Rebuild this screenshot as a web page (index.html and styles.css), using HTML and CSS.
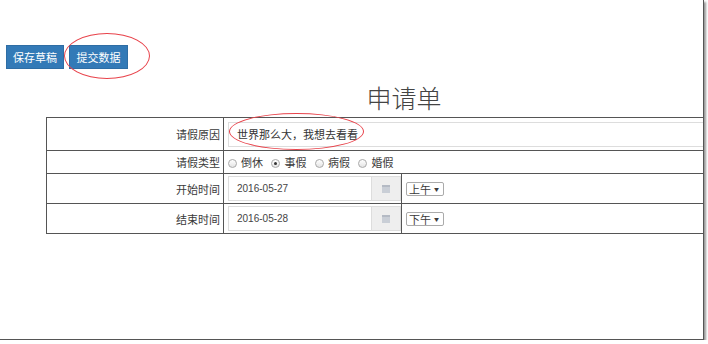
FILE: index.html
```html
<!DOCTYPE html>
<html lang="zh-CN">
<head>
    <meta charset="UTF-8">
    <title>申请单</title>
    <link rel="stylesheet" href="styles.css">
</head>
<body>
    <div class="shot">
        <div class="toolbar">
            <button class="btn">保存草稿</button>
            <button class="btn">提交数据</button>
        </div>
        <div class="sheet">
            <h1 class="title">申请单</h1>
            <table class="form">
                <tr class="row-reason">
                    <td class="label">请假原因</td>
                    <td colspan="2"><div class="text-input">世界那么大，我想去看看</div></td>
                </tr>
                <tr class="row-type">
                    <td class="label">请假类型</td>
                    <td colspan="2">
                        <span class="radio"></span><span class="radio-text">倒休</span>
                        <span class="radio checked"></span><span class="radio-text">事假</span>
                        <span class="radio"></span><span class="radio-text">病假</span>
                        <span class="radio"></span><span class="radio-text">婚假</span>
                    </td>
                </tr>
                <tr class="row-date">
                    <td class="label">开始时间</td>
                    <td class="date-cell">
                        <div class="date-group">
                            <div class="date-value">2016-05-27</div>
                            <div class="date-addon"><span class="cal"></span></div>
                        </div>
                    </td>
                    <td><span class="select">上午<span class="caret">▼</span></span></td>
                </tr>
                <tr class="row-date last">
                    <td class="label">结束时间</td>
                    <td class="date-cell">
                        <div class="date-group">
                            <div class="date-value">2016-05-28</div>
                            <div class="date-addon"><span class="cal"></span></div>
                        </div>
                    </td>
                    <td><span class="select">下午<span class="caret">▼</span></span></td>
                </tr>
            </table>
        </div>
        <!-- annotation marks -->
        <div class="mark mark-submit"></div>
        <div class="mark mark-reason"></div>
    </div>
</body>
</html>
```

FILE: styles.css
```css
body, html {
    margin: 0;
    background-color: white;
    font-family: "Noto Sans CJK SC", "Microsoft YaHei", sans-serif;
    font-size: 11px;
    color: #3a3a3a;
}
.shot {
    position: relative;
    width: 703px;
    height: 339px;
    overflow: hidden;
    background-color: white;
    border-right: 1px solid #555;
    border-bottom: 1px solid #555;
    box-shadow: 2px 2px 2px #999;
}
.toolbar {
    display: flex;
    gap: 5px;
    padding: 45px 0 0 6px;
}
.btn {
    width: 58px;
    height: 24px;
    padding: 0;
    background-color: #337ab7;
    border: 1px solid #2e6da4;
    color: white;
    font-family: inherit;
    font-size: 11px;
    line-height: 22px;
}
.btn + .btn {
    width: 59px;
}
.sheet {
    width: 716px;
    margin-left: 46px;
}
.title {
    margin: 11px 0 0;
    text-align: center;
    font-size: 25px;
    font-weight: 300;
    line-height: 34px;
    color: #444;
}
.form {
    margin-top: 3px;
    width: 716px;
    border-collapse: collapse;
}
.form td {
    border: 1px solid #555;
    padding: 0 0 0 4px;
    vertical-align: middle;
}
.form td.label {
    width: 173px;
    padding: 0 3px 0 0;
    text-align: right;
}
.row-reason td {
    height: 32px;
}
.row-type td {
    height: 22px;
}
.row-date td {
    height: 29px;
}
.text-input {
    height: 23px;
    line-height: 23px;
    border: 1px solid #ddd;
    padding-left: 8px;
    color: #333;
}
.radio {
    display: inline-block;
    box-sizing: border-box;
    width: 9px;
    height: 9px;
    border: 1px solid #aaa;
    border-radius: 50%;
    background: linear-gradient(#fff, #e4e4e4);
    vertical-align: -1px;
    position: relative;
}
.radio.checked::after {
    content: "";
    position: absolute;
    left: 2px;
    top: 2px;
    width: 3px;
    height: 3px;
    border-radius: 50%;
    background-color: #333;
}
.radio-text {
    margin: 0 6px 0 4px;
}
.form td.date-cell {
    width: 173px;
}
.date-group {
    display: flex;
    height: 23px;
    border: 1px solid #ddd;
}
.date-value {
    flex: 1;
    padding-left: 8px;
    line-height: 23px;
    font-family: "Liberation Sans", sans-serif;
    font-size: 10px;
    color: #444;
}
.date-addon {
    width: 28px;
    border-left: 1px solid #ddd;
    background-color: #eee;
    display: flex;
    align-items: center;
    justify-content: center;
}
.cal {
    width: 8px;
    height: 8px;
    background-color: #c9ced6;
    border-top: 2px solid #b4bac4;
    box-sizing: border-box;
}
.select {
    display: inline-flex;
    align-items: center;
    justify-content: space-between;
    box-sizing: border-box;
    width: 38px;
    height: 14px;
    padding: 0 4px 0 2px;
    border: 1px solid #aaa;
    border-radius: 2px;
    line-height: 12px;
}
.caret {
    font-size: 5px;
}
.mark {
    position: absolute;
    border: 1px solid #e8434b;
    border-radius: 50%;
}
.mark-submit {
    left: 64px;
    top: 33px;
    width: 84px;
    height: 44px;
}
.mark-reason {
    left: 229px;
    top: 113px;
    width: 133px;
    height: 35px;
}
```
